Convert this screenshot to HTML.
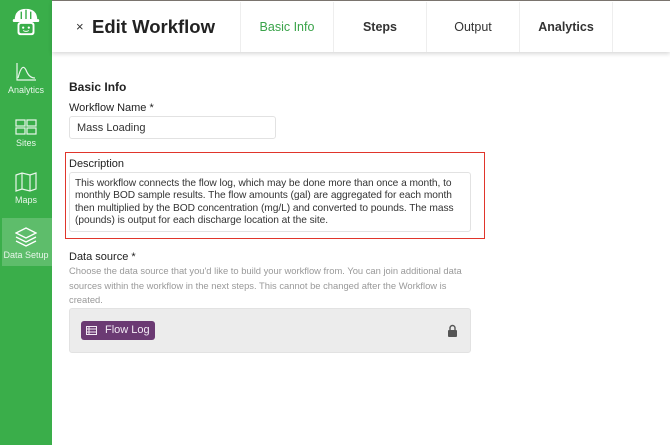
<!DOCTYPE html>
<html><head><style>
*{box-sizing:border-box;margin:0;padding:0}
body{width:670px;height:445px;overflow:hidden;font-family:"Liberation Sans",Arial,sans-serif;background:#fff;position:relative;color:#222}
.sb{position:absolute;left:0;top:0;width:52px;height:445px;background:#3aae4a}
.it{position:absolute;left:0;width:52px;text-align:center;color:#e8f6ea;font-size:9px}
.it svg{display:block;margin:0 auto 3px}
.top{position:absolute;left:52px;top:0;right:0;height:52px;background:#fff;border-top:1px solid #7a746e;box-shadow:0 2px 4px rgba(0,0,0,.15)}
.tab{position:absolute;top:1px;height:50px;border-left:1px solid #eee;line-height:50px;text-align:center;font-size:12.5px;font-weight:bold;color:#333;width:93px}
.lbl{position:absolute;font-size:11px;font-weight:bold;color:#222}
.box{position:absolute;border:1px solid #e2e2e2;border-radius:3px;font-size:11px;color:#333}
</style></head><body>
<div class="sb">
<svg style="position:absolute;left:9px;top:6px" width="34" height="32" viewBox="0 0 32 34"><path d="M4 15 Q4 3 16 3 Q28 3 28 15 Z" fill="#fff"/><path d="M16 4v10M11 6v8M21 6v8" stroke="#3aae4a" stroke-width="1.5"/><rect x="2" y="14" width="28" height="3" rx="1" fill="#fff"/><rect x="7" y="17" width="18" height="14" rx="3" fill="#fff"/><rect x="9" y="19" width="14" height="10" rx="2" fill="#3aae4a"/><circle cx="13" cy="23" r="1.2" fill="#fff"/><circle cx="19" cy="23" r="1.2" fill="#fff"/><path d="M13 26 q3 2 6 0" stroke="#fff" fill="none"/></svg>
<div class="it" style="top:62px"><svg width="22" height="20" viewBox="0 0 22 20" fill="none" stroke="#e8f6ea" stroke-width="1.2"><path d="M2 1v17h19"/><path d="M3 16 Q7 0 11 8 Q14 16 20 16"/></svg>Analytics</div>
<div class="it" style="top:119px"><svg width="22" height="16" viewBox="0 0 22 16" fill="none" stroke="#e8f6ea" stroke-width="1.2"><rect x="1" y="1" width="9" height="6"/><rect x="12" y="1" width="9" height="6"/><rect x="1" y="9" width="9" height="6"/><rect x="12" y="9" width="9" height="6"/></svg>Sites</div>
<div class="it" style="top:172px"><svg width="22" height="20" viewBox="0 0 22 20" fill="none" stroke="#e8f6ea" stroke-width="1.2"><path d="M1 3l6-2 8 2 6-2v16l-6 2-8-2-6 2z M7 1v16 M15 3v16"/></svg>Maps</div>
<div style="position:absolute;left:2px;top:218px;width:50px;height:48px;background:#5ebd6b"></div>
<div class="it" style="top:227px;left:0"><svg width="22" height="20" viewBox="0 0 22 20" fill="none" stroke="#fff" stroke-width="1.3"><path d="M11 1l10 5-10 5-10-5z M1 10l10 5 10-5 M1 14l10 5 10-5"/></svg>Data Setup</div>
</div>
<div class="top">
<div style="position:absolute;left:24px;top:18px;font-size:13px;color:#333">×</div>
<div style="position:absolute;left:40px;top:15px;font-size:18.5px;font-weight:bold;color:#222">Edit Workflow</div>
<div class="tab" style="left:188px;color:#3aa34a;font-weight:normal">Basic Info</div>
<div class="tab" style="left:281px">Steps</div>
<div class="tab" style="left:374px;font-weight:normal;color:#333">Output</div>
<div class="tab" style="left:467px">Analytics</div>
<div class="tab" style="left:560px;width:60px"></div>
</div>
<div class="lbl" style="left:69px;top:80px;font-size:12px">Basic Info</div>
<div class="lbl" style="left:69px;top:102px;font-weight:normal">Workflow Name *</div>
<div class="box" style="left:69px;top:116px;width:207px;height:23px;padding:5px 7px">Mass Loading</div>
<div style="position:absolute;left:65px;top:152px;width:420px;height:87px;border:1.5px solid #e0352b"></div>
<div class="lbl" style="left:69px;top:158px;font-weight:normal">Description</div>
<div class="box" style="left:69px;top:172px;width:402px;height:60px;padding:5px 3px 5px 5px;line-height:12.3px;font-size:10.2px;letter-spacing:-0.05px;white-space:nowrap">This workflow connects the flow log, which may be done more than once a month, to<br>monthly BOD sample results. The flow amounts (gal) are aggregated for each month<br>then multiplied by the BOD concentration (mg/L) and converted to pounds. The mass<br>(pounds) is output for each discharge location at the site.</div>
<div class="lbl" style="left:69px;top:251px;font-weight:normal">Data source *</div>
<div style="position:absolute;left:69px;top:264px;width:410px;font-size:9.4px;line-height:14.5px;color:#999;white-space:nowrap">Choose the data source that you'd like to build your workflow from. You can join additional data<br>sources within the workflow in the next steps. This cannot be changed after the Workflow is<br>created.</div>
<div style="position:absolute;left:69px;top:308px;width:402px;height:45px;background:#ececec;border:1px solid #e2e2e2;border-radius:3px"></div>
<div style="position:absolute;left:81px;top:321px;width:74px;height:19px;background:#6b3a73;border-radius:3px;color:#f3eaf5;font-size:11px;line-height:19px;padding-left:24px">Flow Log<svg style="position:absolute;left:5px;top:5px" width="11" height="9" viewBox="0 0 11 9" fill="none" stroke="#f3eaf5" stroke-width="1"><rect x=".5" y=".5" width="10" height="8"/><path d="M.5 3h10M.5 6h10M3 .5v8"/></svg></div>
<svg style="position:absolute;left:447px;top:324px" width="11" height="13" viewBox="0 0 11 13"><path d="M3 6V4a2.5 2.5 0 0 1 5 0v2" stroke="#555" stroke-width="1.4" fill="none"/><rect x="1" y="6" width="9" height="7" rx="1" fill="#555"/></svg>
</body></html>
